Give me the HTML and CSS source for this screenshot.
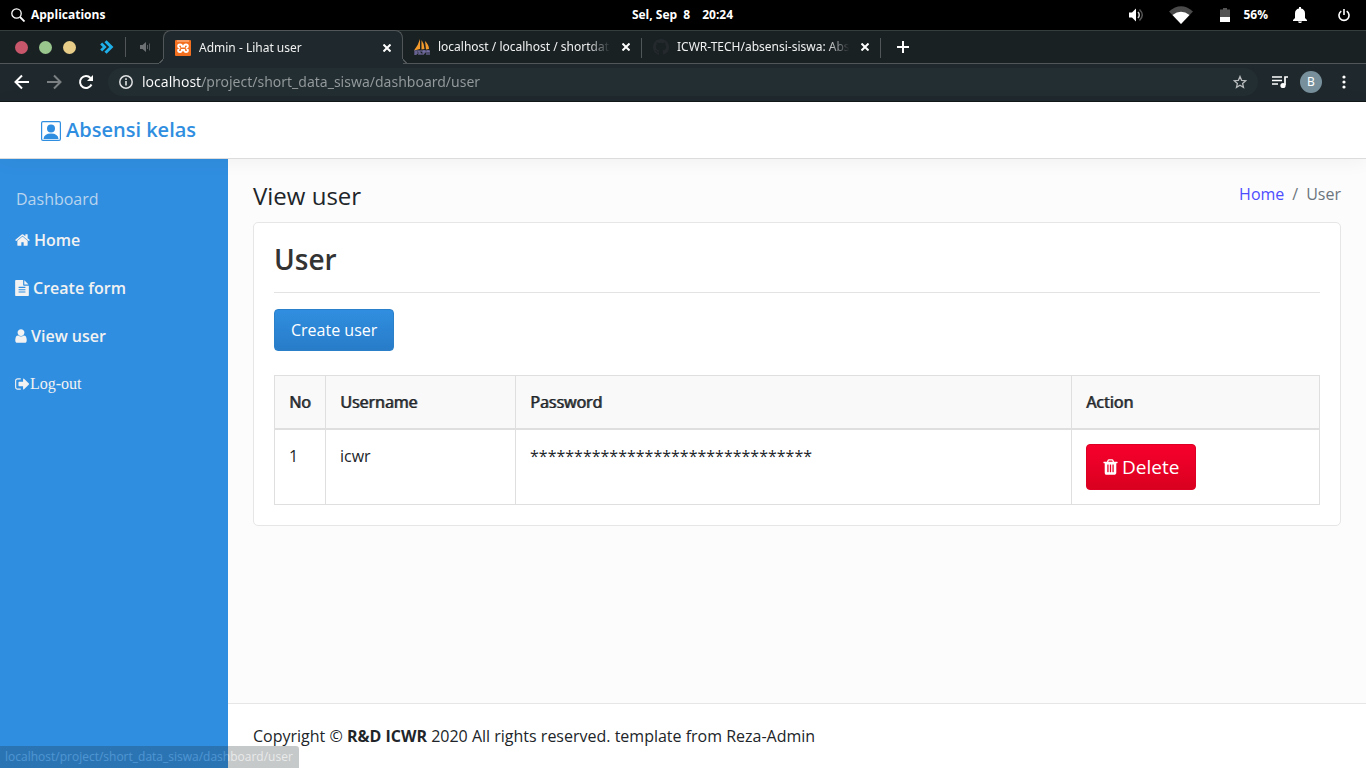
FILE: index.html
```html
<!DOCTYPE html>
<html lang="id">
<head>
<meta charset="utf-8">
<title>Admin - Lihat user</title>
<link rel="stylesheet" href="styles.css">
</head>
<body>
<div class="system-bar">
  <button class="sys-btn apps">
    <svg width="14" height="14" viewBox="0 0 14 14" fill="none" stroke="#fff"><circle cx="5.5" cy="5.5" r="4.700" stroke-width="1.300"/><path d="M9 9l4.500 4.500" stroke-width="1.800"/></svg>
    Applications
  </button>
  <button class="sys-btn clock"><span>Sel, Sep&nbsp; 8</span><span>20:24</span></button>
  <div class="tray">
    <button class="sys-btn" aria-label="Volume"><svg width="16" height="16" viewBox="0 0 16 16"><path d="M1 5.500h3L8 1.500v13L4 10.500H1z" fill="#fff"/><path d="M10 5q2.500 3 0 6" fill="none" stroke="#ccc" stroke-width="1.500"/><path d="M11.500 2.500q5.500 5.500 0 11" fill="none" stroke="#555" stroke-width="1.500"/></svg></button>
    <button class="sys-btn wifi" aria-label="Wi-Fi"><svg width="24" height="18" viewBox="0 0 24 18"><path d="M0 5.500Q12-5 24 5.500L12 18z" fill="#4a4a4a"/><path d="M3.500 9Q12 2.500 20.500 9L12 18z" fill="#fff"/></svg></button>
    <button class="sys-btn battery"><svg width="10" height="14" viewBox="0 0 10 14"><path d="M0 1.500h3V0h4v1.500h3V9H0z" fill="#555"/><path d="M0 9h10v5H0z" fill="#fff"/></svg>56%</button>
    <button class="sys-btn" aria-label="Notifications"><svg width="14" height="16" viewBox="0 0 14 16"><path d="M6 0h2v1.500q4 .8 4 5V11l2 2v1H0v-1l2-2V6.500q0-4.200 4-5zM5 14.500h4q-.3 1.500-2 1.500t-2-1.500z" fill="#fff"/></svg></button>
    <button class="sys-btn power" aria-label="Power"><svg width="12" height="14" viewBox="0 0 12 14" fill="none" stroke="#fff" stroke-width="1.600"><path d="M3.300 3.200a5 5 0 1 0 5.400 0M6 1v6"/></svg></button>
  </div>
</div>

<div class="tab-strip">
  <div class="window-controls">
    <button class="dot red" aria-label="Close"></button>
    <button class="dot green" aria-label="Minimise"></button>
    <button class="dot yellow" aria-label="Maximise"></button>
    <button class="pinned" aria-label="Pinned tab"><svg width="14" height="14" viewBox="0 0 14 14" fill="none" stroke="#1fb0ea"><path d="M5.500 1.200L11.300 7l-5.800 5.800" stroke-width="3"/><path d="M1.200 3.500L4.700 7l-3.500 3.500" stroke-width="2.800"/></svg></button>
    <button class="muted" aria-label="Pinned tab audio"><svg width="11" height="10" viewBox="0 0 11 10"><path d="M0 3h2.500L6 0v10L2.500 7H0z" fill="#6d7173"/><path d="M7.500 3v4M9.500 1.500v7" stroke="#555b5e" fill="none"/></svg></button>
  </div>
  <div class="tab active">
    <svg width="16" height="16" viewBox="0 0 16 16"><rect width="16" height="16" rx="1" fill="#f37021"/><path d="M2 1h12" stroke="#ffc49e"/><path d="M5 4.500c-2.500 0-2.500 3 0 3.500-2.500.500-2.500 4 0 4 1.500 0 2-1.500 2-2h2c0 .5.500 2 2 2 2.500 0 2.500-3.500 0-4 2.500-.5 2.500-3.500 0-3.500-1.500 0-2 1-2 2H7c0-1-.5-2-2-2z" fill="none" stroke="#fff" stroke-width="1.900"/></svg>
    <button class="tab-title">Admin - Lihat user</button>
    <button class="close" aria-label="Close tab"><svg width="8" height="8" viewBox="0 0 8 8"><path d="M.5.5l7 7M7.500.5l-7 7"/></svg></button>
  </div>
  <div class="tab">
    <svg width="16" height="16" viewBox="0 0 16 16"><path d="M6 0v10L0 11.500Q4 7 6 0zM7.500 1q3 4 3 9l-3 .5zM11 2q4 4 4 8l-3 .5z" fill="#f39a2c"/><path d="M0 12h16M1 16v-3h2v2H1m4 1v-4m0 2h2v2m2 0v-4h2v2H9m4 2v-4h2v4" fill="none" stroke="#8078b5"/></svg>
    <button class="tab-title">localhost / localhost / shortdatas</button>
    <button class="close" aria-label="Close tab"><svg width="8" height="8" viewBox="0 0 8 8"><path d="M.5.5l7 7M7.500.5l-7 7"/></svg></button>
  </div>
  <div class="tab">
    <svg width="16" height="16" viewBox="0 0 16 16" fill="#24292e"><path d="M8 0C3.580 0 0 3.580 0 8c0 3.540 2.290 6.530 5.470 7.590.4.070.55-.17.55-.38v-1.490c-2.010.37-2.530-.49-2.690-.94-.09-.23-.48-.94-.82-1.130-.28-.15-.68-.52-.01-.53.630-.01 1.080.58 1.230.82.720 1.210 1.870.87 2.330.66.070-.52.280-.87.510-1.070-1.780-.2-3.640-.89-3.640-3.950 0-.87.310-1.590.82-2.150-.08-.2-.36-1.020.08-2.120 0 0 .67-.21 2.200.82a7.600 7.600 0 0 1 4 0c1.530-1.040 2.200-.82 2.200-.82.440 1.100.160 1.920.080 2.120.510.560.82 1.270.82 2.150 0 3.070-1.870 3.750-3.650 3.950.290.250.540.730.540 1.480v2.200c0 .21.150.46.550.38A8 8 0 0 0 8 0z"/></svg>
    <button class="tab-title">ICWR-TECH/absensi-siswa: Abse</button>
    <button class="close" aria-label="Close tab"><svg width="8" height="8" viewBox="0 0 8 8"><path d="M.5.5l7 7M7.500.5l-7 7"/></svg></button>
  </div>
  <div class="strip-rest">
    <button aria-label="New tab"><svg width="12" height="12" viewBox="0 0 12 12"><path d="M6 0v12M0 6h12" stroke="#fff" stroke-width="2"/></svg></button>
  </div>
</div>

<div class="toolbar">
  <button aria-label="Back"><svg width="16" height="16" viewBox="0 0 16 16" fill="none" stroke="#fff" stroke-width="2"><path d="M15 8H2M8 1.500L1.500 8 8 14.500"/></svg></button>
  <button aria-label="Forward"><svg width="16" height="16" viewBox="0 0 16 16" fill="none" stroke="#7b8183" stroke-width="2"><path d="M1 8h13M8 1.500L14.500 8 8 14.500"/></svg></button>
  <button aria-label="Reload"><svg width="16" height="16" viewBox="0 0 16 16"><path d="M13.500 10.500A6 6 0 1 1 12.500 4" fill="none" stroke="#fff" stroke-width="2"/><path d="M15 1v6H9z" fill="#fff"/></svg></button>
  <div class="address">
    <svg width="14" height="14" viewBox="0 0 14 14" fill="none" stroke="#dfe1e2"><circle cx="7" cy="7" r="6.200" stroke-width="1.500"/><path d="M7 6v4.500M7 3.300V5" stroke-width="1.600"/></svg>
    <input class="url" type="text" aria-label="Address" value="localhost/project/short_data_siswa/dashboard/user">
    <button aria-label="Bookmark"><svg width="14" height="14" viewBox="0 0 14 14"><path d="M7 1.500l1.600 3.800 4.100.4-3.100 2.700.9 4L7 10.300l-3.500 2.100.9-4L1.300 5.700l4.100-.4z" fill="none" stroke="#b9bcbd" stroke-width="1.300"/></svg></button>
  </div>
  <button aria-label="Media"><svg width="16" height="14" viewBox="0 0 16 14"><path d="M0 2h10M0 5.500h10M0 9h6M16 2h-3v8" fill="none" stroke="#fff" stroke-width="1.700"/><circle cx="11" cy="10.500" r="2.600" fill="#fff"/></svg></button>
  <button class="avatar">B</button>
  <button aria-label="Menu"><svg width="4" height="14" viewBox="0 0 4 14" fill="#fff"><circle cx="2" cy="2" r="1.600"/><circle cx="2" cy="7" r="1.600"/><circle cx="2" cy="12" r="1.600"/></svg></button>
</div>

<div class="page">
  <header class="site-header">
    <a class="brand" href="#">
      <svg width="20" height="22" viewBox="0 -2 20 22"><rect x=".6" y=".6" width="18.800" height="18.800" rx="1.300" fill="none" stroke="#308ee0" stroke-width="1.200"/><circle cx="10" cy="7.500" r="4" fill="#308ee0"/><path d="M2.500 18q.5-5.500 7.500-5.500t7.500 5.500z" fill="#308ee0"/></svg>
      Absensi kelas
    </a>
  </header>
  <div class="site-body">
    <nav class="sidebar">
      <p class="nav-label">Dashboard</p>
      <a href="#"><svg width="15" height="16" viewBox="64 0 1664 1792"><path d="M1472 992v480q0 26-19 45t-45 19h-384v-384h-256v384h-384q-26 0-45-19t-19-45v-480q0-1 .5-3t.5-3l575-474 575 474q1 2 1 6zm223-69l-62 74q-8 9-21 11h-3q-13 0-21-7l-692-577-692 577q-12 8-24 7-13-2-21-11l-62-74q-8-10-7-23.500t11-21.500l719-599q32-26 76-26t76 26l244 204v-195q0-14 9-23t23-9h192q14 0 23 9t9 23v408l219 182q10 8 11 21.500t-7 23.500z"/></svg>Home</a>
      <a href="#"><svg width="14" height="16" viewBox="128 0 1536 1792"><path d="M1596 476q14 14 28 36h-472v-472q22 14 36 28zm-476 164h544v1056q0 40-28 68t-68 28h-1344q-40 0-68-28t-28-68v-1600q0-40 28-68t68-28h800v544q0 40 28 68t68 28zm160 736v-64q0-14-9-23t-23-9h-704q-14 0-23 9t-9 23v64q0 14 9 23t23 9h704q14 0 23-9t9-23zm0-256v-64q0-14-9-23t-23-9h-704q-14 0-23 9t-9 23v64q0 14 9 23t23 9h704q14 0 23-9t9-23zm0-256v-64q0-14-9-23t-23-9h-704q-14 0-23 9t-9 23v64q0 14 9 23t23 9h704q14 0 23-9t9-23z"/></svg>Create form</a>
      <a href="#"><svg width="12" height="16" viewBox="256 0 1280 1792"><path d="M1536 1399q0 109-62.500 187t-150.500 78h-854q-88 0-150.500-78t-62.500-187q0-85 8.500-160.500t31.500-152 58.500-131 94-89 134.500-34.500q131 128 313 128t313-128q76 0 134.500 34.500t94 89 58.500 131 31.500 152 8.500 160.500zm-256-887q0 159-112.500 271.500t-271.500 112.500-271.500-112.500-112.500-271.500 112.500-271.500 271.500-112.500 271.500 112.500 112.500 271.500z"/></svg>View user</a>
      <a class="logout" href="#"><svg width="15" height="16" viewBox="64 0 1664 1792"><path d="M704 1440q0 4 1 20t.5 26.500-3 23.500-10 19.500-20.500 6.500h-320q-119 0-203.500-84.500t-84.500-203.500v-704q0-119 84.500-203.500t203.500-84.500h320q13 0 22.500 9.500t9.500 22.500q0 4 1 20t.5 26.500-3 23.500-10 19.500-20.500 6.500h-320q-66 0-113 47t-47 113v704q0 66 47 113t113 47h312l11.500 1 11.500 3 8 5.500 7 9 2 13.500zm928-544q0 26-19 45l-544 544q-19 19-45 19t-45-19-19-45v-288h-448q-26 0-45-19t-19-45v-384q0-26 19-45t45-19h448v-288q0-26 19-45t45-19 45 19l544 544q19 19 19 45z"/></svg>Log-out</a>
    </nav>
    <div class="content">
      <main>
        <div class="title-row">
          <h1>View user</h1>
          <div class="breadcrumb"><a href="#">Home</a><span>/</span><span>User</span></div>
        </div>
        <section class="card">
          <h2>User</h2>
          <hr>
          <button class="btn primary">Create user</button>
          <table>
            <colgroup><col class="col-no"><col class="col-name"><col><col class="col-action"></colgroup>
            <thead><tr><th>No</th><th>Username</th><th>Password</th><th>Action</th></tr></thead>
            <tbody><tr><td>1</td><td>icwr</td><td>********************************</td>
              <td><button class="btn danger"><svg width="15" height="18" viewBox="192 0 1408 1792" fill="#fff"><path d="M704 1376v-704q0-14-9-23t-23-9h-64q-14 0-23 9t-9 23v704q0 14 9 23t23 9h64q14 0 23-9t9-23zm256 0v-704q0-14-9-23t-23-9h-64q-14 0-23 9t-9 23v704q0 14 9 23t23 9h64q14 0 23-9t9-23zm256 0v-704q0-14-9-23t-23-9h-64q-14 0-23 9t-9 23v704q0 14 9 23t23 9h64q14 0 23-9t9-23zm-544-992h448l-48-117q-7-9-17-11h-317q-10 2-17 11zm928 32v64q0 14-9 23t-23 9h-96v948q0 83-47 143.500t-113 60.500h-832q-66 0-113-58.500t-47-141.500v-952h-96q-14 0-23-9t-9-23v-64q0-14 9-23t23-9h309l70-167q15-37 54-63t79-26h320q40 0 79 26t54 63l70 167h309q14 0 23 9t9 23z"/></svg>Delete</button></td></tr></tbody>
          </table>
        </section>
      </main>
      <footer>Copyright © <strong>R&amp;D ICWR</strong> 2020 All rights reserved. template from Reza-Admin</footer>
    </div>
  </div>
</div>
<div class="status-bubble">localhost/project/short_data_siswa/dashboard/user</div>
</body>
</html>
```
FILE: styles.css
```css
* { box-sizing: border-box; }
body {
  margin: 0;
  min-height: 100vh;
  display: flex;
  flex-direction: column;
  font: 16px/24px "Open Sans", sans-serif;
  color: #212529;
  background: #fcfcfc;
}
button {
  margin: 0;
  padding: 0;
  border: 0;
  background: none;
  color: inherit;
  font: inherit;
}
svg { display: block; flex: none; }
a { text-decoration: none; }
h1, h2, p { margin: 0; }

/* System bar */
.system-bar {
  height: 30px;
  padding: 0 16px 0 11px;
  display: grid;
  grid-template-columns: 1fr auto 1fr;
  align-items: center;
  background: #000;
  color: #fff;
  font: 700 12px/18px "Open Sans", sans-serif;
}
.sys-btn { display: flex; align-items: center; gap: 6px; }
.apps { justify-self: start; }
.clock { gap: 12px; padding-left: 4px; }
.tray { display: flex; justify-content: flex-end; align-items: center; gap: 25px; }
.battery { gap: 13px; margin-left: 2px; }
.power { margin-left: 6px; }

/* Tab strip */
.tab-strip {
  height: 34px;
  display: flex;
  background: #1a2123;
  border-top: 1px solid #363d3f;
  color: #f0f1f1;
  font: 12px/18px "Noto Sans", sans-serif;
}
.window-controls {
  width: 163px;
  padding-left: 15px;
  display: flex;
  align-items: center;
  border-bottom: 1px solid #515658;
}
.dot { width: 13px; height: 13px; margin-right: 11px; border-radius: 50%; }
.red { background: #c9576b; }
.green { background: #98c68d; }
.yellow { background: #e8cd89; }
.pinned { margin-left: 13px; }
.muted { margin-left: 11px; padding: 5px 0 5px 14px; border-left: 1px solid #515658; }
.tab {
  position: relative;
  width: 239px;
  padding: 0 12px 0 11px;
  display: flex;
  align-items: center;
  border-bottom: 1px solid #515658;
}
.tab::after {
  content: "";
  position: absolute;
  right: 0;
  top: 7px;
  height: 20px;
  border-right: 1px solid #515658;
}
.tab.active {
  width: 240px;
  padding-right: 11px;
  border: 1px solid #515658;
  border-bottom: 0;
  border-radius: 8px 8px 0 0;
  margin-top: -1px;
  background: #1f282c;
}
.tab.active::before, .tab.active::after {
  content: "";
  position: absolute;
  top: auto;
  bottom: 0;
  width: 8px;
  height: 8px;
  border: 0;
  background: radial-gradient(circle at 0 0, #1a2123 7px, #515658 7px 8px, #1f282c 8px);
}
.tab.active::before { left: -8px; }
.tab.active::after {
  right: -8px;
  background: radial-gradient(circle at 100% 0, #1a2123 7px, #515658 7px 8px, #1f282c 8px);
}
.tab-title {
  flex: 1;
  min-width: 0;
  margin: 0 8px;
  overflow: hidden;
  white-space: nowrap;
  text-align: left;
  mask-image: linear-gradient(to right, #000 85%, transparent 98%);
}
.close svg { fill: none; stroke: #fff; stroke-width: 2; }
.strip-rest {
  flex: 1;
  padding-left: 16px;
  display: flex;
  align-items: center;
  border-bottom: 1px solid #515658;
}

/* Toolbar */
.toolbar {
  height: 38px;
  padding: 4px 20px 6px 14px;
  display: flex;
  align-items: center;
  gap: 16px;
  background: #1f282c;
  border-bottom: 1px solid #12181a;
}
.address {
  flex: 1;
  height: 28px;
  margin: 0 -2px;
  padding: 0 11px;
  display: flex;
  align-items: center;
  gap: 9px;
  border-radius: 14px;
  background: #232e33;
}
.url {
  flex: 1;
  min-width: 0;
  padding: 0;
  border: 0;
  font: 14px/20px "Noto Sans", sans-serif;
  color: transparent;
  background: linear-gradient(to right, #fff 60px, #959b9d 60px);
  background-clip: text;
}
.avatar {
  width: 22px;
  height: 22px;
  margin: 0 4px 0 -4px;
  border-radius: 50%;
  background: #78909c;
  color: #fff;
  font: 12px/22px "Noto Sans", sans-serif;
}

/* Site */
.page { flex: 1; display: flex; flex-direction: column; }
.site-header {
  position: relative;
  padding: 12px 41px;
  background: #fff;
  border-bottom: 1px solid #dcdcdc;
  box-shadow: 0 2px 20px rgba(0, 0, 0, .05);
}
.brand {
  display: flex;
  align-items: center;
  gap: 5px;
  color: #308ee0;
  font-size: 20px;
  font-weight: 600;
  line-height: 32px;
}
.site-body { flex: 1; display: flex; }
.sidebar { width: 228px; padding: 28px 15px; background: #308ee0; }
.nav-label { margin: 0 1px 5px; color: #b8d4ee; }
.sidebar a {
  height: 48px;
  display: flex;
  align-items: center;
  gap: 4px;
  color: #f2f2f2;
  font-weight: 600;
}
.sidebar svg { fill: #f2f2f2; }
.sidebar .logout { gap: 0; font-family: "Liberation Serif", serif; font-weight: 400; }
.content { flex: 1; display: flex; flex-direction: column; }
main { flex: 1; padding: 23px 25px; }
.title-row { display: flex; justify-content: space-between; margin-bottom: 12px; }
h1 { font-size: 24px; font-weight: 400; line-height: 28px; }
.breadcrumb { display: flex; gap: 8px; color: #6c757d; }
.breadcrumb a { color: #4d4dff; }
.card { padding: 20px; border: 1px solid #e6e6e6; border-radius: 5px; background: #fff; }
h2 { color: #333; font-size: 28px; font-weight: 600; line-height: 32px; }
hr { margin: 17px 0 16px; border: 0; border-top: 1px solid #e3e3e3; }
.btn {
  display: flex;
  align-items: center;
  gap: 4px;
  padding: 0 16px;
  border: 1px solid #2b80ca;
  border-radius: 4px;
  color: #fff;
  line-height: 40px;
}
.primary { background: linear-gradient(#308ee0, #287cc8); }
.danger {
  border-color: #dd0024;
  background: linear-gradient(#f7002c, #d9001f);
  font-size: 19px;
  line-height: 44px;
}
table { width: 100%; margin-top: 24px; border-collapse: collapse; table-layout: fixed; }
.col-no { width: 51px; }
.col-name { width: 190px; }
.col-action { width: 248px; }
th, td { padding: 14px; border: 1px solid #dfdfdf; text-align: left; vertical-align: top; }
th {
  border-bottom-width: 2px;
  background: #f9f9f9;
  font-weight: 400;
  text-shadow: 1px 0 rgba(33, 37, 41, .8);
}
footer { padding: 20px 25px; border-top: 1px solid #e6e6e6; background: #fff; }
.status-bubble {
  position: fixed;
  left: 0;
  bottom: 0;
  padding: 2px 6px 2px 5px;
  border-radius: 0 3px 0 0;
  background: #1f282c;
  color: #a6abad;
  font: 12px/18px "Open Sans", sans-serif;
  opacity: .25;
}
```
